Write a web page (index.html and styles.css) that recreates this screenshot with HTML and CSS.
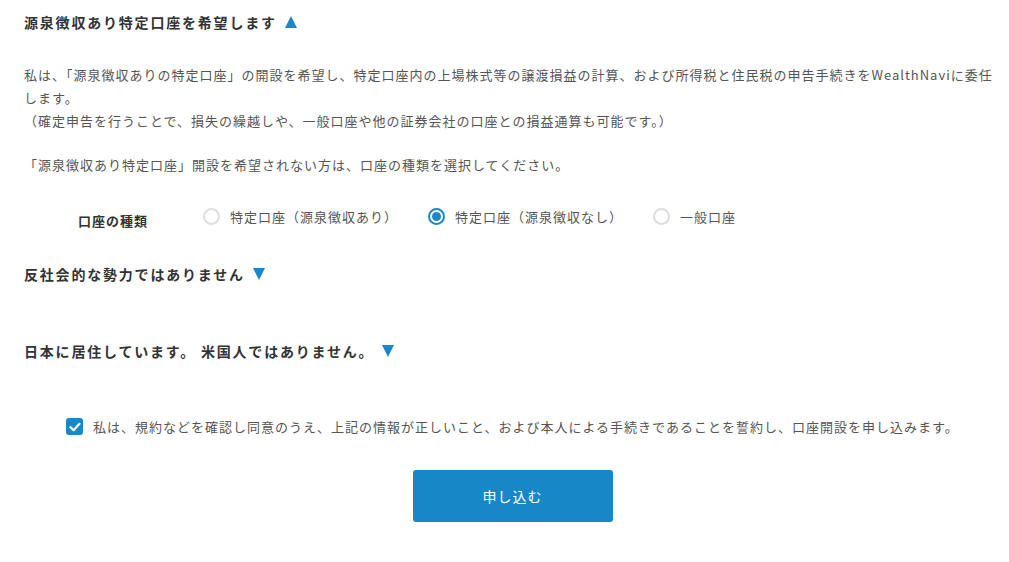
FILE: index.html
```html
<!DOCTYPE html>
<html lang="ja">
<head>
    <meta charset="UTF-8">
    <meta name="viewport" content="width=device-width, initial-scale=1.0">
    <title>口座開設の申し込み</title>
    <link rel="stylesheet" href="styles.css">
</head>
<body>
    <form class="apply">
        <h2 class="toggle">源泉徴収あり特定口座を希望します <span class="tri up"></span></h2>
        <p class="note">私は、「源泉徴収ありの特定口座」の開設を希望し、特定口座内の上場株式等の譲渡損益の計算、および所得税と住民税の申告手続きをWealthNaviに委任します。<br>（確定申告を行うことで、損失の繰越しや、一般口座や他の証券会社の口座との損益通算も可能です。）</p>
        <p class="note">「源泉徴収あり特定口座」開設を希望されない方は、口座の種類を選択してください。</p>

        <div class="kind">
            <span class="kind-label">口座の種類</span>
            <label class="radio"><input type="radio" name="kind"><span class="dot"></span>特定口座（源泉徴収あり）</label>
            <label class="radio"><input type="radio" name="kind" checked><span class="dot"></span>特定口座（源泉徴収なし）</label>
            <label class="radio"><input type="radio" name="kind"><span class="dot"></span>一般口座</label>
        </div>

        <h2 class="toggle second">反社会的な勢力ではありません <span class="tri down"></span></h2>
        <h2 class="toggle third">日本に居住しています。 米国人ではありません。 <span class="tri down"></span></h2>

        <label class="agree">
            <input type="checkbox" checked>
            <span class="box">
                <svg width="12" height="10" viewBox="0 0 12 10"><path d="M1.5 5.2 L4.6 8.2 L10.5 1.8" fill="none" stroke="#fff" stroke-width="2.2" stroke-linecap="round" stroke-linejoin="round"/></svg>
            </span>
            私は、規約などを確認し同意のうえ、上記の情報が正しいこと、および本人による手続きであることを誓約し、口座開設を申し込みます。
        </label>

        <div class="actions">
            <button type="button">申し込む</button>
        </div>
    </form>
</body>
</html>
```

FILE: styles.css
```css
body {
    margin: 0;
    font-family: "Noto Sans CJK JP", "Noto Sans", sans-serif;
    color: #333;
    background: #fff;
}
.apply {
    padding: 12px 8px 0 24px;
}
.toggle {
    font-size: 14px;
    font-weight: bold;
    letter-spacing: 1.8px;
    line-height: 20px;
    margin: 0;
    color: #333;
}
.toggle.second {
    margin-top: 38px;
}
.toggle.third {
    margin-top: 57px;
}
.tri {
    display: inline-block;
    width: 0;
    height: 0;
    margin-left: 3px;
    border-left: 6.5px solid transparent;
    border-right: 6.5px solid transparent;
    vertical-align: 0;
}
.tri.up {
    border-bottom: 12px solid #1a87c8;
}
.tri.down {
    border-top: 12px solid #1a87c8;
}
.note {
    font-size: 13px;
    letter-spacing: 1px;
    line-height: 23px;
    color: #555;
    margin: 31px 0 0;
}
.note + .note {
    margin-top: 21px;
}
.kind {
    display: flex;
    align-items: center;
    margin-top: 31px;
    font-size: 13px;
    letter-spacing: 1px;
    color: #555;
}
.kind-label {
    width: 125px;
    padding-left: 54px;
    font-weight: bold;
    color: #333;
    position: relative;
    top: 4px;
}
.radio {
    display: flex;
    align-items: center;
    margin-right: 30px;
    cursor: pointer;
}
.radio input {
    display: none;
}
.dot {
    width: 17px;
    height: 17px;
    box-sizing: border-box;
    border: 2px solid #ddd;
    border-radius: 50%;
    margin-right: 10px;
    display: flex;
    align-items: center;
    justify-content: center;
}
.radio input:checked + .dot {
    border-color: #1a87c8;
}
.radio input:checked + .dot::after {
    content: "";
    width: 9px;
    height: 9px;
    border-radius: 50%;
    background: #1a87c8;
}
.agree {
    display: flex;
    align-items: center;
    margin: 56px 0 0 42px;
    font-size: 13px;
    letter-spacing: 1px;
    color: #555;
}
.agree input {
    display: none;
}
.box {
    width: 17px;
    height: 17px;
    border-radius: 3px;
    background: #1a87c8;
    margin-right: 10px;
    display: flex;
    align-items: center;
    justify-content: center;
}
.actions {
    display: flex;
    justify-content: center;
    margin-top: 34px;
}
button {
    width: 200px;
    height: 52px;
    border: none;
    border-radius: 3px;
    background-color: #1787c7;
    color: #fff;
    font-family: inherit;
    font-size: 14px;
    letter-spacing: 1px;
    cursor: pointer;
}
```
